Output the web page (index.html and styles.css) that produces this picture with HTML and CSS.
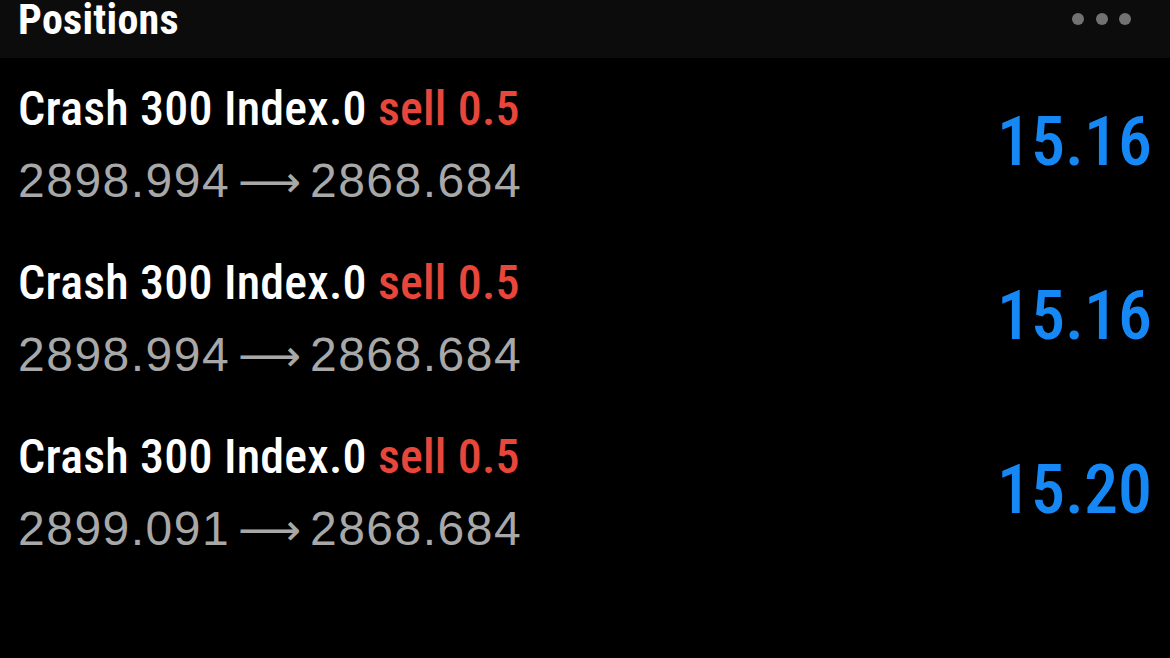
FILE: index.html
```html
<!DOCTYPE html>
<html>
<head>
<meta charset="utf-8">
<title>Positions</title>
<link rel="stylesheet" href="styles.css">
</head>
<body>
<header class="header">
  <h1 class="header-title">Positions</h1>
  <div class="more" aria-label="More">
    <span class="dot"></span><span class="dot"></span><span class="dot"></span>
  </div>
</header>
<main class="list">
  <div class="row">
    <div class="info">
      <div class="symbol">Crash 300 Index.0 <span class="side">sell 0.5</span></div>
      <div class="prices">2898.994 <span class="arrow">⟶</span> 2868.684</div>
    </div>
    <div class="profit">15.16</div>
  </div>
  <div class="row">
    <div class="info">
      <div class="symbol">Crash 300 Index.0 <span class="side">sell 0.5</span></div>
      <div class="prices">2898.994 <span class="arrow">⟶</span> 2868.684</div>
    </div>
    <div class="profit">15.16</div>
  </div>
  <div class="row">
    <div class="info">
      <div class="symbol">Crash 300 Index.0 <span class="side">sell 0.5</span></div>
      <div class="prices">2899.091 <span class="arrow">⟶</span> 2868.684</div>
    </div>
    <div class="profit">15.20</div>
  </div>
</main>
</body>
</html>
```
FILE: styles.css
```css
html, body {
  margin: 0;
  padding: 0;
  background: #000;
  height: 100%;
}
body {
  color: #fff;
  font-family: "Roboto Condensed", "Liberation Sans", sans-serif;
}
.header {
  height: 58px;
  background: #0c0c0c;
  display: flex;
  align-items: flex-start;
  justify-content: space-between;
  padding: 0 39px 0 18px;
  box-sizing: border-box;
}
.header-title {
  margin: 0;
  font-family: "Roboto Condensed", sans-serif;
  font-weight: 700;
  font-size: 42px;
  line-height: 40px;
  letter-spacing: 0.3px;
}
.more {
  display: flex;
  gap: 11.5px;
  padding-top: 13px;
}
.dot {
  width: 12px;
  height: 12px;
  border-radius: 50%;
  background: #727272;
}
.list {
  display: flex;
  flex-direction: column;
}
.row {
  height: 174px;
  display: flex;
  align-items: center;
  justify-content: space-between;
  padding: 0 18px 0 18px;
}
.info {
  display: flex;
  flex-direction: column;
  white-space: nowrap;
}
.symbol {
  font-family: "Roboto Condensed", sans-serif;
  font-weight: 500;
  font-size: 48px;
  line-height: 72px;
  letter-spacing: 0.2px;
}
.side {
  color: #e8463b;
}
.prices {
  font-family: "Liberation Sans", sans-serif;
  font-size: 48px;
  line-height: 72px;
  color: #a8a8a8;
  letter-spacing: 1.5px;
  word-spacing: -7px;
}
.arrow {
  display: inline-block;
  font-family: "DejaVu Sans", sans-serif;
  font-size: 44px;
  letter-spacing: 0;
  margin-left: 0;
  margin-right: 1px;
}
.profit {
  font-family: "Roboto Condensed", sans-serif;
  font-weight: 500;
  font-size: 68px;
  line-height: 1;
  color: #1688f5;
  margin-top: -6px;
}
```
